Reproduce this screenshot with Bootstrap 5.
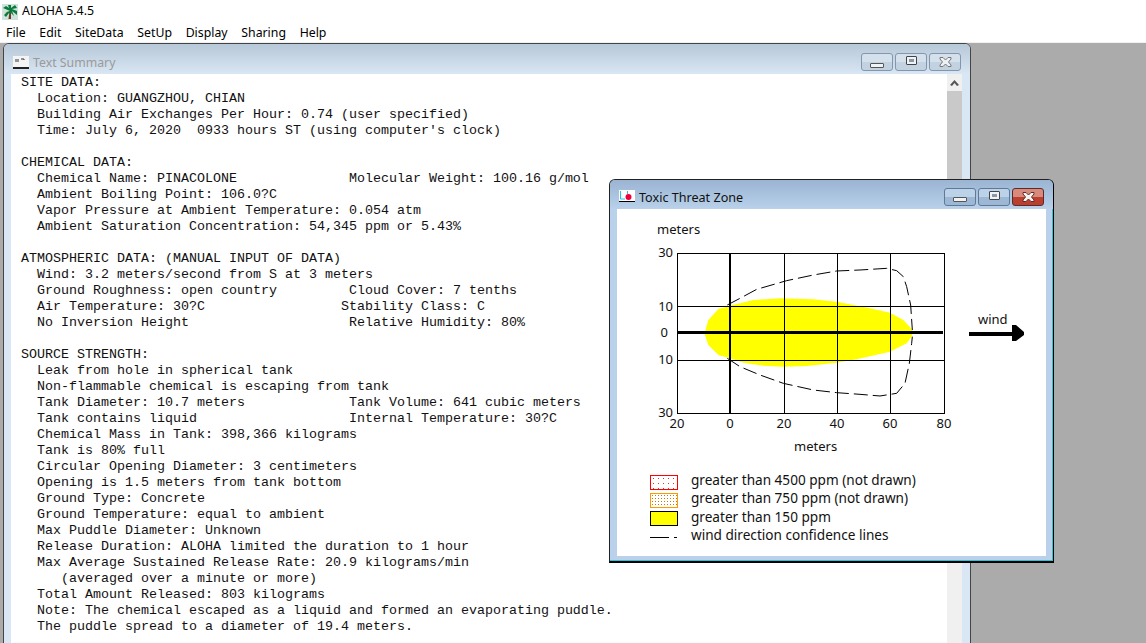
<!DOCTYPE html>
<html>
<head>
  <meta charset="UTF-8">
  <title>ALOHA 5.4.5</title>
  <link href="https://cdn.jsdelivr.net/npm/bootstrap@5.3.2/dist/css/bootstrap.min.css" rel="stylesheet">
  <style>
    body { background: #fff; font-family: "Noto Sans", sans-serif; color: #000; }
    .app-title { height: 22px; padding: 1px 0 0 2px; font-size: 12.4px; gap: 4px; }
    .app-menu { height: 21px; padding: 2px 0 0 6px; gap: 13.7px; font-size: 12.3px; border-bottom: 1px solid #f0f0f0; }
    .desktop { background: #ababab; }

    .mdi-win { position: absolute; overflow: hidden; }
    .win-text { left: 3px; top: 0; width: 968px; height: 620px; border: 1px solid #444; border-radius: 6px 6px 0 0; background: #d9e6f3; }
    .win-toxic { left: 609px; top: 136px; width: 445px; height: 384px; border: 1px solid #222; border-right-color: #000; border-bottom: 2px solid #000; border-radius: 6px 6px 0 0; background: #b9d1ea; box-shadow: inset -1px -1px 0 #22c8dc; }

    .win-bar { height: 30px; }
    .win-text .win-bar { padding: 6px 9px 0 9px; font-size: 12.3px; background: linear-gradient(#b7c8d8, #d9e6f3); color: #9a9a9a; }
    .win-toxic .win-bar { height: 29px; padding: 4px 9px 0 9px; font-size: 12.6px; background: linear-gradient(#9ab4d2, #b9d1ea); color: #111; }
    .bar-label { margin-left: 4px; padding-top: 2px; }
    .win-toxic .bar-label { padding-top: 4px; }
    .toxic-icon { margin-bottom: 2px; }
    .win-btns { gap: 2px; margin-left: auto; }
    .win-btn { width: 32px; height: 18px; border: 1px solid #8496ad; border-radius: 3px; background: linear-gradient(#d4e0ec 50%, #c3d2e0 50%); }
    .win-toxic .win-btn { border-color: #5f7896; background: linear-gradient(#bcd2e8 50%, #9db8d4 50%); }
    .win-toxic .btn-close-red { border-color: #5c2a2a; background: linear-gradient(#d88a7c 50%, #bb3f2f 50%); }
    .glyph-min { width: 14px; height: 5px; margin-top: 6px; background: #f0f3f6; border: 1px solid #555; border-radius: 1px; }
    .glyph-max { width: 11px; height: 9px; margin-bottom: 3px; background: #f0f3f6; border: 1px solid #444; border-radius: 1px; box-shadow: inset 0 0 0 2px #f0f3f6, inset 0 0 0 6px #8a97a6; }

    .text-body-wrap { height: 590px; padding: 0 8px 0 7px; }
    .summary-pane { flex: 1; background: #fff; overflow: hidden; }
    .summary { margin: 0; padding: 1px 0 0 10px; font-family: "Liberation Mono", "Courier New", monospace; font-size: 13.33px; line-height: 16px; color: #111; overflow: hidden; }
    .scroll-col { width: 15px; background: #f0f0f0; }
    .scroll-up { height: 17px; }
    .scroll-track { height: 180px; background: #c9c9c9; }

    .toxic-client { margin: 0 7px; height: 347px; background: #fff; font-family: "Noto Sans", sans-serif; }
    .chart { display: block; }
    .chart text { font-size: 13px; fill: #111; }
    .legend { position: absolute; left: 33px; top: 262px; font-size: 13.6px; color: #111; }
    .legend-row { height: 18.4px; gap: 13px; }
    .swatch { width: 28px; height: 15px; margin-top: 4px; }
    .swatch-red { border: 1px solid #f00; background-color: #fff; background-image: radial-gradient(#d33 .7px, transparent .8px); background-size: 5px 5px; }
    .swatch-orange { border: 1px solid #f90; background-color: #fff; background-image: radial-gradient(#c70 .7px, transparent .8px); background-size: 3px 3px; }
    .swatch-yellow { border: 1px solid #000; background: #ff0; }
    .swatch-line { height: 1px; background: linear-gradient(to right, #000 0 19px, transparent 19px 24px, #000 24px 27px, transparent 27px); }
  </style>
</head>
<body class="vh-100 d-flex flex-column overflow-hidden">

  <div class="app-title d-flex align-items-center flex-shrink-0">
    <svg width="16" height="16" viewBox="0 0 16 16">
      <rect width="16" height="16" fill="#cfe3dc"/>
      <path d="M6.5 15 L7.5 7 L9 7 L9 15Z" fill="#6b3d1e"/>
      <path d="M8 7 L1 4 L4 2 L7 4 L6 1 L9 1 L9 4 L13 1 L15 4 L10 5 L15 7 L15 11 L10 7 L12 12 L9 9 L7 9 L4 13 L2 11 L5 8 L1 9Z" fill="#0a7a3a"/>
    </svg>
    <span>ALOHA 5.4.5</span>
  </div>

  <nav class="app-menu d-flex align-items-center flex-shrink-0">
    <span>File</span><span>Edit</span><span>SiteData</span><span>SetUp</span><span>Display</span><span>Sharing</span><span>Help</span>
  </nav>

  <div class="desktop flex-grow-1 position-relative">

    <div class="mdi-win win-text">
      <div class="win-bar d-flex align-items-center">
        <svg width="16" height="13" viewBox="0 0 16 13">
          <rect width="16" height="12" fill="#f4f4f4"/>
          <rect y="11" width="16" height="2" fill="#222"/>
          <path d="M3 3v3M5 3v3M8 3h3v1" stroke="#333" fill="none"/>
        </svg>
        <span class="bar-label">Text Summary</span>
        <div class="win-btns d-flex">
          <div class="win-btn d-flex align-items-center justify-content-center"><div class="glyph-min"></div></div>
          <div class="win-btn d-flex align-items-center justify-content-center"><div class="glyph-max"></div></div>
          <div class="win-btn d-flex align-items-center justify-content-center">
            <svg width="13" height="10" viewBox="0 0 13 10"><path d="M1 .5H4L6.5 3 9 .5H12V2L9.5 5 12 8V9.5H9L6.5 7 4 9.5H1V8L3.5 5 1 2Z" fill="#eef1f4" stroke="#777"/></svg>
          </div>
        </div>
      </div>
      <div class="text-body-wrap d-flex">
        <div class="summary-pane">
<pre class="summary">SITE DATA:
  Location: GUANGZHOU, CHIAN
  Building Air Exchanges Per Hour: 0.74 (user specified)
  Time: July 6, 2020  0933 hours ST (using computer's clock)

CHEMICAL DATA:
  Chemical Name: PINACOLONE              Molecular Weight: 100.16 g/mol
  Ambient Boiling Point: 106.0?C
  Vapor Pressure at Ambient Temperature: 0.054 atm
  Ambient Saturation Concentration: 54,345 ppm or 5.43%

ATMOSPHERIC DATA: (MANUAL INPUT OF DATA)
  Wind: 3.2 meters/second from S at 3 meters
  Ground Roughness: open country         Cloud Cover: 7 tenths
  Air Temperature: 30?C                 Stability Class: C
  No Inversion Height                    Relative Humidity: 80%

SOURCE STRENGTH:
  Leak from hole in spherical tank
  Non-flammable chemical is escaping from tank
  Tank Diameter: 10.7 meters             Tank Volume: 641 cubic meters
  Tank contains liquid                   Internal Temperature: 30?C
  Chemical Mass in Tank: 398,366 kilograms
  Tank is 80% full
  Circular Opening Diameter: 3 centimeters
  Opening is 1.5 meters from tank bottom
  Ground Type: Concrete
  Ground Temperature: equal to ambient
  Max Puddle Diameter: Unknown
  Release Duration: ALOHA limited the duration to 1 hour
  Max Average Sustained Release Rate: 20.9 kilograms/min
     (averaged over a minute or more)
  Total Amount Released: 803 kilograms
  Note: The chemical escaped as a liquid and formed an evaporating puddle.
  The puddle spread to a diameter of 19.4 meters.</pre>
        </div>
        <div class="scroll-col">
          <div class="scroll-up d-flex align-items-center justify-content-center">
            <svg width="9" height="6" viewBox="0 0 9 6"><path d="M0 5 L4.5 0 L9 5 L7 6 L4.5 3 L2 6Z" fill="#555"/></svg>
          </div>
          <div class="scroll-track"></div>
        </div>
      </div>
    </div>

    <div class="mdi-win win-toxic">
      <div class="win-bar d-flex align-items-center">
        <svg class="toxic-icon" width="16" height="12" viewBox="0 0 16 12">
          <rect width="16" height="11" fill="#fff"/>
          <rect y="11" width="16" height="1" fill="#000"/>
          <path d="M1.5 1V9H6M8.5 1V4" stroke="#19c8e8" fill="none"/>
          <circle cx="9.5" cy="7" r="3" fill="#f0003c"/>
        </svg>
        <span class="bar-label">Toxic Threat Zone</span>
        <div class="win-btns d-flex">
          <div class="win-btn d-flex align-items-center justify-content-center"><div class="glyph-min"></div></div>
          <div class="win-btn d-flex align-items-center justify-content-center"><div class="glyph-max"></div></div>
          <div class="win-btn btn-close-red d-flex align-items-center justify-content-center">
            <svg width="13" height="10" viewBox="0 0 13 10"><path d="M1 .5H4L6.5 3 9 .5H12V2L9.5 5 12 8V9.5H9L6.5 7 4 9.5H1V8L3.5 5 1 2Z" fill="#f4f4f4" stroke="#6a2a22"/></svg>
          </div>
        </div>
      </div>
      <div class="toxic-client position-relative">
        <svg class="chart" width="430" height="347" viewBox="617 209 430 347">
          <g transform="translate(640 240) scale(.33333)">
            <path fill="#ff0" d="M195 275 L205 240 L235 207 L270 197 L340 180 L420 175 L520 178 L590 185 L690 205 L750 218 L790 240 L818 270 L815 290 L800 310 L750 335 L650 358 L590 368 L500 378 L430 380 L370 377 L310 368 L270 355 L235 345 L205 315 L195 285Z"/>
          </g>
          <g stroke="#000" stroke-width="1" fill="none" shape-rendering="crispEdges">
            <rect x="677.5" y="253.5" width="267" height="160"/>
            <path d="M784.5 253V413M837.5 253V413M890.5 253V413M677 306.5H944M677 360.5H944"/>
            <path d="M730 253V413" stroke-width="2"/>
            <path d="M677 332.5H943" stroke-width="3"/>
          </g>
          <g transform="translate(640 240) scale(.33333)" fill="none" stroke="#000">
            <path vector-effect="non-scaling-stroke" stroke-dasharray="14 5" d="M262 195 L300 175 L350 148 L440 122 L520 105 L590 93 L660 90 L740 85 L770 92 L790 110 L800 140 L812 195 L815 240 L817 270"/>
            <path vector-effect="non-scaling-stroke" stroke-dasharray="14 5" d="M262 355 L300 380 L360 405 L430 430 L520 450 L590 458 L660 463 L720 468 L770 460 L795 430 L808 370 L815 310 L817 290"/>
          </g>
          <path d="M969 332H1012V325H1016L1024 332V335L1016 341H1012V336H969Z" fill="#000"/>
          <text x="657" y="234">meters</text>
          <text x="673" y="257" text-anchor="end">30</text>
          <text x="673" y="311" text-anchor="end">10</text>
          <text x="668" y="337" text-anchor="end">0</text>
          <text x="673" y="364" text-anchor="end">10</text>
          <text x="673" y="417" text-anchor="end">30</text>
          <text x="677" y="428" text-anchor="middle">20</text>
          <text x="730" y="428" text-anchor="middle">0</text>
          <text x="784" y="428" text-anchor="middle">20</text>
          <text x="837" y="428" text-anchor="middle">40</text>
          <text x="890" y="428" text-anchor="middle">60</text>
          <text x="944" y="428" text-anchor="middle">80</text>
          <text x="794" y="451">meters</text>
          <text x="978" y="324">wind</text>
        </svg>
        <div class="legend">
          <div class="legend-row d-flex align-items-center"><div class="swatch swatch-red"></div><span>greater than 4500 ppm (not drawn)</span></div>
          <div class="legend-row d-flex align-items-center"><div class="swatch swatch-orange"></div><span>greater than 750 ppm (not drawn)</span></div>
          <div class="legend-row d-flex align-items-center"><div class="swatch swatch-yellow"></div><span>greater than 150 ppm</span></div>
          <div class="legend-row d-flex align-items-center"><div class="swatch swatch-line"></div><span>wind direction confidence lines</span></div>
        </div>
      </div>
    </div>

  </div>
</body>
</html>
